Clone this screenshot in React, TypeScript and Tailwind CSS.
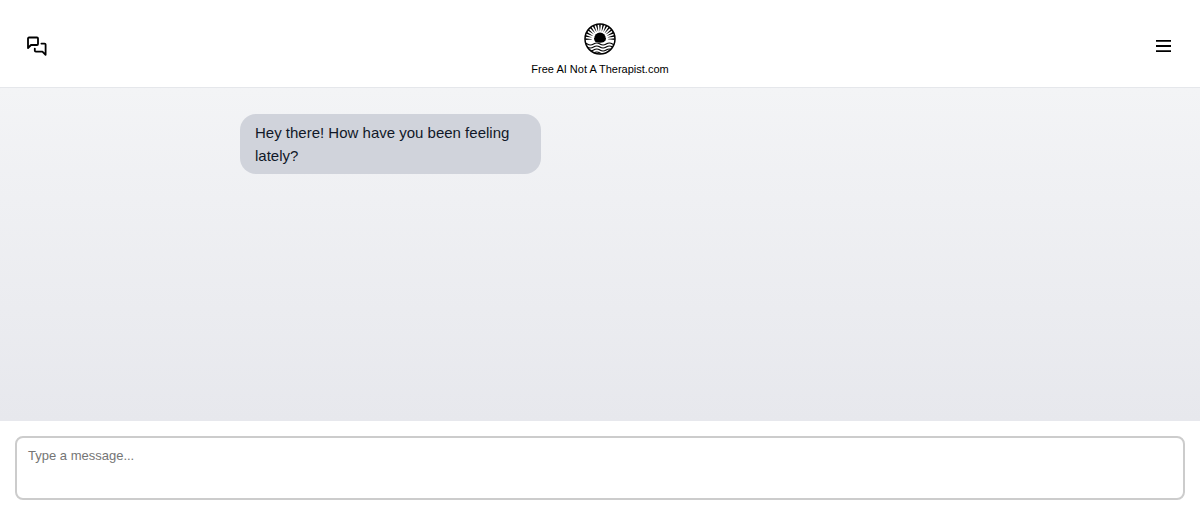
const RAYS = Array.from({ length: 15 }, (_, i) => (i * 180) / 14)
const WAVES = [21, 24, 27, 30]

function Logo() {
	return (
		<svg viewBox="0 0 32 32" className="h-8 w-8" aria-hidden="true">
			<defs>
				<clipPath id="disc">
					<circle cx="16" cy="16" r="14.8" />
				</clipPath>
			</defs>
			<g clipPath="url(#disc)">
				{/* sun rays, wider towards the rim */}
				{RAYS.map((angle) => (
					<path
						key={angle}
						d="M8 16.2 L0 15.2 V17.2 L8 16.4 Z"
						transform={`rotate(${angle} 16 16.2)`}
					/>
				))}
				<circle cx="16" cy="15.4" r="5.8" />
				{/* sea */}
				<path
					d="M0 18.6 Q4 16.4 8 18 T16 18.6 T24 18 T32 18.4 V32 H0 Z"
					fill="white"
				/>
				<path d="M10.2 15 H21.8 Q21.6 17.8 20 19 Q16 20.4 12 19 Q10.4 17.8 10.2 15 Z" />
				{WAVES.map((y) => (
					<path
						key={y}
						d={`M-3 ${y} q3.2 -2 6.3 0 t6.3 0 t6.3 0 t6.3 0 t6.3 0 t6.3 0`}
						fill="none"
						stroke="black"
						strokeWidth="1.2"
					/>
				))}
			</g>
			<circle
				cx="16"
				cy="16"
				r="15"
				fill="none"
				stroke="black"
				strokeWidth="1.5"
			/>
		</svg>
	)
}

function ChatsIcon() {
	return (
		<svg
			viewBox="0 0 22 22"
			className="h-[22px] w-[22px]"
			fill="none"
			stroke="black"
			strokeWidth="1.8"
			strokeLinecap="round"
			strokeLinejoin="round"
			aria-hidden="true"
		>
			<path d="M12 9a1 1 0 0 1-1 1H5L2 13V3.5a1 1 0 0 1 1-1h8a1 1 0 0 1 1 1z" />
			<path d="M15.4 8.6H18.6a1 1 0 0 1 1 1V19.8L16.4 16.6H9.8a1 1 0 0 1-1-1V13.6" />
		</svg>
	)
}

function Header() {
	return (
		<header className="flex items-center justify-between border-b border-gray-200 bg-white px-[26px] pt-[23px] pb-2">
			<button type="button" aria-label="Conversations" className="pb-[10px]">
				<ChatsIcon />
			</button>
			<a href="/" className="flex flex-col items-center gap-1">
				<Logo />
				<span className="text-[11px] leading-5">
					Free AI Not A Therapist.com
				</span>
			</a>
			<button type="button" aria-label="Menu" className="pb-[10px]">
				<svg viewBox="0 0 20 20" className="h-5 w-[22px]" aria-hidden="true">
					<path
						d="M3 4.8h15M3 10h15M3 15.2h15"
						fill="none"
						stroke="black"
						strokeWidth="1.8"
					/>
				</svg>
			</button>
		</header>
	)
}

export default function App() {
	return (
		<div className="flex min-h-screen flex-col bg-white font-['Liberation_Sans',Arial,sans-serif] text-black">
			<Header />

			<main className="flex-1 bg-linear-to-b from-[#f3f4f6] to-[#e7e8ed]">
				<div className="mx-auto w-3/5 py-[26px]">
					<p className="max-w-[301px] rounded-2xl bg-[#d0d3db] px-[15px] py-[7px] text-[15px] leading-[23px] text-gray-900">
						Hey there! How have you been feeling lately?
					</p>
				</div>
			</main>

			<form className="flex bg-white px-[15px] pt-[15px] pb-[11px]">
				<textarea
					aria-label="Message"
					placeholder="Type a message..."
					rows={2}
					className="w-full resize-none rounded-lg border-2 border-[#cccccc] px-[11px] pt-[7px] pb-[9px] text-[13px] leading-[22px] placeholder:text-[#757575]"
				/>
			</form>
		</div>
	)
}
